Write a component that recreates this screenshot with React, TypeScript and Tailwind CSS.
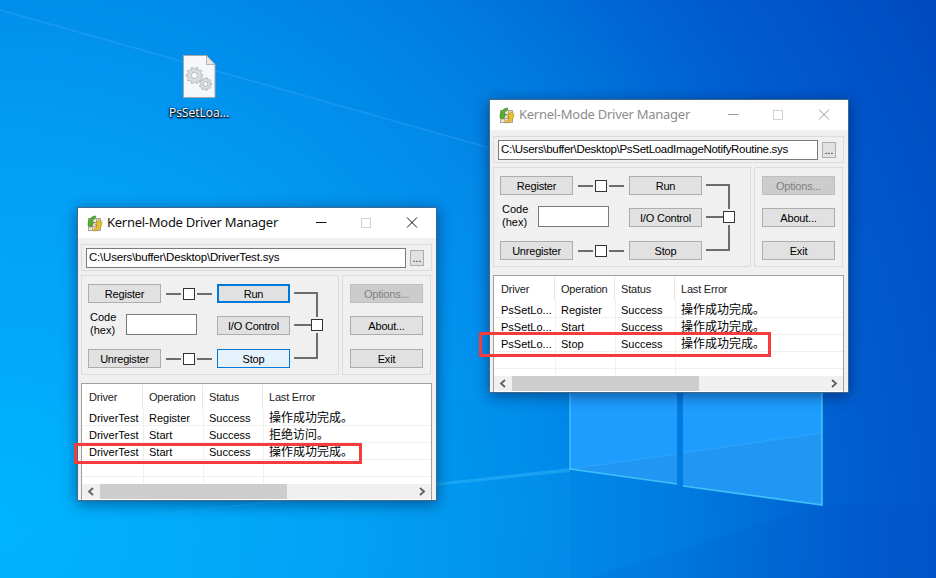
import React from "react";

const ui = "font-['Liberation_Sans','Noto_Sans_CJK_SC',sans-serif]";

function Wallpaper() {
  return (
    <svg className="absolute inset-0" width="936" height="578" viewBox="0 0 936 578">
      <defs>
        <radialGradient id="base" gradientUnits="userSpaceOnUse" cx="0" cy="520" r="1075">
          <stop offset="0" stopColor="#00b4ff" />
          <stop offset="0.33" stopColor="#00a0f5" />
          <stop offset="0.5" stopColor="#008cea" />
          <stop offset="0.63" stopColor="#007ce0" />
          <stop offset="0.78" stopColor="#0060d2" />
          <stop offset="1" stopColor="#0048c0" />
        </radialGradient>
      </defs>
      <rect width="936" height="578" fill="url(#base)" />
      <polygon points="0,10 490,148 490,400 0,400" fill="#10a0ff" opacity="0.1" />
      <line x1="0" y1="10" x2="490" y2="148" stroke="#3aa4f5" strokeWidth="1.500" opacity="0.45" />
      <polygon points="570,468 140,516 570,472" fill="#50ccff" opacity="0.3" />
      <polygon points="570,468 0,530 0,578 570,578" fill="#20c0ff" opacity="0.06" />
      <polygon points="822,505 590,578 936,578 936,505" fill="#0040b0" opacity="0.08" />
      <polygon points="570,300 677,300 677,454 570,469" fill="#1e9dff" />
      <polygon points="683,300 822,300 822,433 683,453" fill="#1e9dff" />
      <polygon points="570,469 677,454 677,484" fill="#2196f3" />
      <polygon points="683,453 822,433 822,505 683,486" fill="#2196f3" />
      <polyline points="570,300 570,469 677,484" fill="none" stroke="#4fd6ff" strokeWidth="1.500" opacity="0.7" />
      <polyline points="822,300 822,505 683,486" fill="none" stroke="#4fd6ff" strokeWidth="1.700" opacity="0.75" />
      <line x1="570" y1="469" x2="677" y2="454" stroke="#4cc4ff" strokeWidth="1.200" opacity="0.4" />
      <line x1="683" y1="453" x2="822" y2="433" stroke="#4cc4ff" strokeWidth="1.200" opacity="0.4" />
    </svg>
  );
}

function gearPath(cx: number, cy: number, r: number, teeth: number) {
  const pts: string[] = [];
  for (let i = 0; i < teeth; i++) {
    const a = (i / teeth) * Math.PI * 2;
    const d = (Math.PI * 2) / teeth;
    const p = (rad: number, t: number) =>
      `${(cx + rad * Math.cos(t)).toFixed(2)},${(cy + rad * Math.sin(t)).toFixed(2)}`;
    pts.push(p(r * 0.8, a - d * 0.3), p(r, a - d * 0.17), p(r, a + d * 0.17), p(r * 0.8, a + d * 0.3));
  }
  return pts.join(" ");
}

function Gear({ cx, cy, r, teeth }: { cx: number; cy: number; r: number; teeth: number }) {
  return (
    <g>
      <polygon points={gearPath(cx, cy, r, teeth)} fill="#dadde0" stroke="#a2a6aa" strokeWidth="0.700" />
      <circle cx={cx} cy={cy} r={r * 0.38} fill="#f6f7f8" stroke="#a2a6aa" strokeWidth="0.700" />
    </g>
  );
}

function DesktopIcon() {
  return (
    <div className="absolute left-[160px] top-[55px] flex w-[78px] flex-col items-center">
      <svg width="33" height="43" viewBox="0 0 33 43">
        <path d="M.5.5H23.500L32 9.500V42.500H.5Z" fill="#f6f7f8" stroke="#a8a8a8" />
        <path d="M23.500.5V9.500H32Z" fill="#e4e6e8" stroke="#a8a8a8" strokeWidth="0.800" />
        <Gear cx={11.500} cy={20.500} r={8.300} teeth={10} />
        <Gear cx={22.500} cy={29} r={6.300} teeth={9} />
      </svg>
      <span className="mt-[7px] text-[12px] leading-[16px] text-white font-['Open_Sans',sans-serif] [text-shadow:0_1px_1px_#000,1px_1px_2px_#012,-1px_0_2px_#012]">
        PsSetLoa...
      </span>
    </div>
  );
}

function AppIcon() {
  return (
    <svg width="17" height="17" viewBox="0 0 17 17" className="shrink-0">
      <rect x="2.500" y="3.500" width="12" height="12" fill="#eee4dc" stroke="#a58a86" strokeWidth="0.800" />
      <path d="M2.500 7.500H14.500M2.500 11.500H14.500M6.500 3.500V15.500M10.500 3.500V15.500" stroke="#b08a86" strokeWidth="0.800" />
      <path d="M2 10.500C1.500 5.500 5 .8 10 1L9 3.600C7 4 6 6 6.300 7.500L8.300 7L4.800 12.300Z" fill="#56b02e" stroke="#2f7a1c" strokeWidth="0.500" />
      <path d="M15.800 6.500C16.300 11.500 13 16.200 7.500 16L8.500 13.400C10.500 13 11.300 11 11 9.500L9 10L12.500 4.700Z" fill="#e4c32a" stroke="#9c8410" strokeWidth="0.500" />
    </svg>
  );
}

function Btn({ label, kind }: { label: string; kind?: "run" | "stop" | "off" }) {
  const cls =
    kind === "run"
      ? "border-2 border-[#0078d7] bg-[#e1e1e1] text-black"
      : kind === "stop"
        ? "border border-[#0078d7] bg-[#e5f1fb] text-black"
        : kind === "off"
          ? "border border-[#bfbfbf] bg-[#cccccc] text-[#808080]"
          : "border border-[#adadad] bg-[#e1e1e1] text-black";
  return (
    <div className={`flex h-[19px] w-[73px] shrink-0 items-center justify-center pt-[1px] text-[11px] leading-none tracking-[-0.2px] ${cls}`}>
      {label}
    </div>
  );
}

function Link() {
  return (
    <div className="flex w-[56px] shrink-0 items-center justify-center gap-[2px]">
      <div className="h-[2px] w-[15px] bg-[#6d6d6d]" />
      <div className="h-[12px] w-[12px] shrink-0 border border-[#333] bg-white" />
      <div className="h-[2px] w-[15px] bg-[#6d6d6d]" />
    </div>
  );
}

function Chevron({ left }: { left?: boolean }) {
  return (
    <svg width="8" height="9" viewBox="0 0 8 9">
      <path d={left ? "M6 1L2 4.500L6 8" : "M2 1L6 4.500L2 8"} fill="none" stroke="#5f5f5f" strokeWidth="1.800" />
    </svg>
  );
}

function DriverList({ rows }: { rows: string[][] }) {
  const cols = "grid grid-cols-[62px_60px_60px_1fr]";
  const empty = ["", "", "", ""];
  return (
    <div className="mt-[8px] flex min-h-0 w-[351px] flex-1 flex-col overflow-hidden border-x border-t border-[#a0a0a0] bg-white text-[11px] text-black">
      <div className={`${cols} h-[25px] shrink-0 pt-[1px] leading-[24px] tracking-[-0.2px] text-[#222]`}>
        {["Driver", "Operation", "Status", "Last Error"].map((h, i) => (
          <div
            key={h}
            className={`${i === 0 ? "pl-[7px]" : "pl-[5px]"} ${i < 3 ? "mb-[1px] mr-[1px] border-r border-[#e6e6e6]" : ""} whitespace-nowrap`}
          >
            {h}
          </div>
        ))}
      </div>
      <div className="min-h-0 flex-1 overflow-hidden">
        {[...rows, empty, empty].map((r, i) => (
          <div key={i} className={`${cols} h-[17px] border-b border-[#f0f0f0] leading-[19px]`}>
            <div className="overflow-hidden whitespace-nowrap border-r border-[#f0f0f0] pl-[7px]">{r[0]}</div>
            <div className="whitespace-nowrap border-r border-[#f0f0f0] pl-[5px]">{r[1]}</div>
            <div className="whitespace-nowrap border-r border-[#f0f0f0] pl-[5px]">{r[2]}</div>
            <div className="whitespace-nowrap pl-[5px] text-[12px]">{r[3]}</div>
          </div>
        ))}
      </div>
      <div className="flex h-[15px] shrink-0 items-center bg-[#f0f0f0]">
        <div className="flex w-[18px] shrink-0 justify-center"><Chevron left /></div>
        <div className="h-full w-[187px] bg-[#cdcdcd]" />
        <div className="flex-1" />
        <div className="flex w-[18px] shrink-0 justify-center"><Chevron /></div>
      </div>
      <div className="h-[1px] shrink-0 bg-white" />
    </div>
  );
}

function DriverWindow({
  x, y, active, path, rows, pathTight,
}: { x: number; y: number; active?: boolean; path: string; rows: string[][]; pathTight?: boolean }) {
  const cap = active ? "#111" : "#999";
  return (
    <div
      className={`absolute flex h-[294px] w-[360px] flex-col border border-[#3d6a8c] bg-[#f0f0f0] shadow-[0_3px_14px_rgba(0,0,40,0.45)] ${ui}`}
      style={{ left: x, top: y }}
    >
      <div className="flex h-[30px] shrink-0 items-center bg-white pl-[8px]">
        <AppIcon />
        <span className={`ml-[4px] whitespace-nowrap text-[13px] tracking-[-0.27px] font-['Noto_Sans',sans-serif] ${active ? "text-[#111]" : "text-[#8c8c8c]"}`}>
          Kernel-Mode Driver Manager
        </span>
        <svg width="120" height="30" viewBox="0 0 120 30" className="ml-auto shrink-0">
          <path d="M0 14.500H10.500" stroke={cap} strokeWidth="1" />
          <rect x="45.500" y="10.500" width="9" height="9" fill="none" stroke="#d2d2d2" />
          <path d="M91 9.500L101 19.500M101 9.500L91 19.500" stroke={cap} strokeWidth="1" />
        </svg>
      </div>
      <div className="flex min-h-0 flex-1 flex-col pl-[3px] pt-[6px]">
        <div className="flex h-[27px] w-[351px] shrink-0 items-center border border-[#dcdcdc] pl-[4px]">
          <div className={`flex h-[20px] w-[320px] items-center whitespace-nowrap border border-[#7a7a7a] bg-white pl-[2px] pt-[1px] text-[11.500px] text-black ${pathTight ? "tracking-[-0.3px]" : "tracking-[-0.2px]"}`}>
            {path}
          </div>
          <div className="ml-[4px] flex h-[16px] w-[14px] items-end justify-center border border-[#adadad] bg-[#e1e1e1] text-[10px] leading-[12px] text-black">...</div>
        </div>
        <div className="mt-[4px] flex h-[100px] shrink-0 gap-[3px]">
          <div className="flex w-[258px] shrink-0 flex-col border border-[#dcdcdc] pl-[6px] pt-[8px]">
            <div className="flex items-center">
              <Btn label="Register" />
              <Link />
              <Btn label="Run" kind={active ? "run" : undefined} />
            </div>
            <div className="mt-[13px] flex h-[19px] items-center">
              <div className="mb-[4px] w-[38px] shrink-0 pl-[2px] text-[11px] leading-[13px] text-black">Code<br />(hex)</div>
              <div className="mb-[2px] h-[21px] w-[71px] shrink-0 border border-[#7a7a7a] bg-white" />
              <div className="w-[20px] shrink-0" />
              <Btn label="I/O Control" />
            </div>
            <div className="mt-[14px] flex items-center">
              <Btn label="Unregister" />
              <Link />
              <Btn label="Stop" kind={active ? "stop" : undefined} />
            </div>
            <svg className="absolute left-[216px] top-[84px]" width="32" height="72" viewBox="0 0 32 72">
              <path d="M0 1H23V25M0 33H17M23 41V66H0" fill="none" stroke="#6d6d6d" strokeWidth="2" />
              <rect x="17.500" y="27.500" width="11" height="11" fill="#fff" stroke="#333" />
            </svg>
          </div>
          <div className="flex w-[89px] shrink-0 flex-col border border-[#dcdcdc] pl-[7px] pt-[8px]">
            <Btn label="Options..." kind="off" />
            <div className="mt-[13px]"><Btn label="About..." /></div>
            <div className="mt-[14px]"><Btn label="Exit" /></div>
          </div>
        </div>
        <DriverList rows={rows} />
      </div>
    </div>
  );
}

function RedBox({ x, y, w, h }: { x: number; y: number; w: number; h: number }) {
  return (
    <div
      className="absolute border-[3px] border-[#f53b3b]"
      style={{ left: x, top: y, width: w, height: h }}
    />
  );
}

export default function App() {
  return (
    <div className="relative h-[578px] w-[936px] overflow-hidden bg-[#0078d7]">
      <Wallpaper />
      <DesktopIcon />
      <DriverWindow
        x={489}
        y={99}
        pathTight
        path="C:\Users\buffer\Desktop\PsSetLoadImageNotifyRoutine.sys"
        rows={[
          ["PsSetLo...", "Register", "Success", "操作成功完成。"],
          ["PsSetLo...", "Start", "Success", "操作成功完成。"],
          ["PsSetLo...", "Stop", "Success", "操作成功完成。"],
        ]}
      />
      <DriverWindow
        x={77}
        y={207}
        active
        path="C:\Users\buffer\Desktop\DriverTest.sys"
        rows={[
          ["DriverTest", "Register", "Success", "操作成功完成。"],
          ["DriverTest", "Start", "Success", "拒绝访问。"],
          ["DriverTest", "Start", "Success", "操作成功完成。"],
        ]}
      />
      <RedBox x={74} y={443} w={288} h={21} />
      <RedBox x={479} y={332} w={292} h={25} />
    </div>
  );
}
